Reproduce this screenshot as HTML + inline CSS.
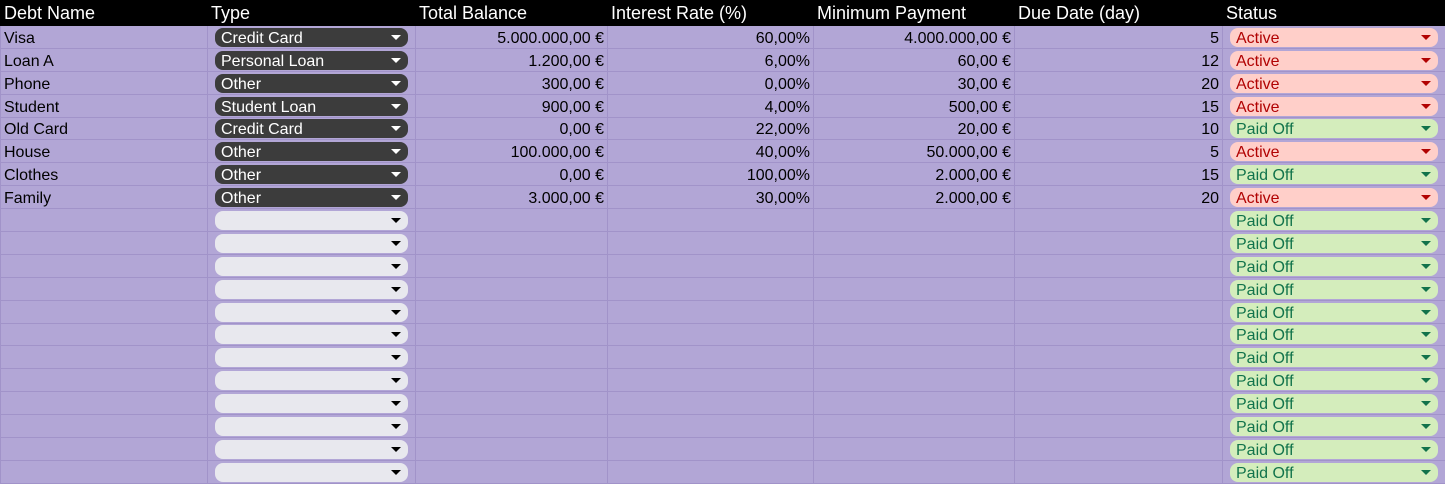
<!DOCTYPE html>
<html><head><meta charset="utf-8"><style>
body{margin:0;width:1445px;height:483px;overflow:hidden;background:#b2a6d6;font-family:"Liberation Sans",Arial,sans-serif;}
table{border-collapse:collapse;table-layout:fixed;width:1445px;margin-top:-1px;}
td,th{padding:0 3px;height:21.9px;border:1px solid #a193c9;font-size:16px;line-height:18px;white-space:nowrap;overflow:hidden;color:#000;vertical-align:bottom;}
th{background:#000;color:#fff;font-weight:normal;text-align:left;height:24px;border-color:#000;font-size:18px;padding-top:1px;vertical-align:middle;}
td.r{text-align:right;}
.chip{position:relative;height:19px;border-radius:8px;margin:0 4px 1px;padding-left:6px;line-height:21px;font-size:16px;}
.chip:after{content:"";position:absolute;right:7px;top:7px;border-left:5px solid transparent;border-right:5px solid transparent;border-top:5px solid currentColor;}
.d{background:#3c3c3c;color:#fff;}
.e{background:#e8e8ee;color:#000;}
.a{background:#ffcfc9;color:#b10202;}
.p{background:#d4edbc;color:#11734b;}
.s{padding:0 3px;vertical-align:bottom;}
</style></head><body>
<table>
<colgroup><col style="width:207px"><col style="width:208px"><col style="width:192px"><col style="width:206px"><col style="width:201px"><col style="width:208px"><col style="width:223px"></colgroup>
<tr><th>Debt Name</th><th>Type</th><th>Total Balance</th><th>Interest Rate (%)</th><th>Minimum Payment</th><th>Due Date (day)</th><th>Status</th></tr>
<tr><td>Visa</td><td class="s"><div class="chip d">Credit Card</div></td><td class="r">5.000.000,00 €</td><td class="r">60,00%</td><td class="r">4.000.000,00 €</td><td class="r">5</td><td class="s"><div class="chip a">Active</div></td></tr>
<tr><td>Loan A</td><td class="s"><div class="chip d">Personal Loan</div></td><td class="r">1.200,00 €</td><td class="r">6,00%</td><td class="r">60,00 €</td><td class="r">12</td><td class="s"><div class="chip a">Active</div></td></tr>
<tr><td>Phone</td><td class="s"><div class="chip d">Other</div></td><td class="r">300,00 €</td><td class="r">0,00%</td><td class="r">30,00 €</td><td class="r">20</td><td class="s"><div class="chip a">Active</div></td></tr>
<tr><td>Student</td><td class="s"><div class="chip d">Student Loan</div></td><td class="r">900,00 €</td><td class="r">4,00%</td><td class="r">500,00 €</td><td class="r">15</td><td class="s"><div class="chip a">Active</div></td></tr>
<tr><td>Old Card</td><td class="s"><div class="chip d">Credit Card</div></td><td class="r">0,00 €</td><td class="r">22,00%</td><td class="r">20,00 €</td><td class="r">10</td><td class="s"><div class="chip p">Paid Off</div></td></tr>
<tr><td>House</td><td class="s"><div class="chip d">Other</div></td><td class="r">100.000,00 €</td><td class="r">40,00%</td><td class="r">50.000,00 €</td><td class="r">5</td><td class="s"><div class="chip a">Active</div></td></tr>
<tr><td>Clothes</td><td class="s"><div class="chip d">Other</div></td><td class="r">0,00 €</td><td class="r">100,00%</td><td class="r">2.000,00 €</td><td class="r">15</td><td class="s"><div class="chip p">Paid Off</div></td></tr>
<tr><td>Family</td><td class="s"><div class="chip d">Other</div></td><td class="r">3.000,00 €</td><td class="r">30,00%</td><td class="r">2.000,00 €</td><td class="r">20</td><td class="s"><div class="chip a">Active</div></td></tr>
<tr><td></td><td class="s"><div class="chip e"></div></td><td></td><td></td><td></td><td></td><td class="s"><div class="chip p">Paid Off</div></td></tr>
<tr><td></td><td class="s"><div class="chip e"></div></td><td></td><td></td><td></td><td></td><td class="s"><div class="chip p">Paid Off</div></td></tr>
<tr><td></td><td class="s"><div class="chip e"></div></td><td></td><td></td><td></td><td></td><td class="s"><div class="chip p">Paid Off</div></td></tr>
<tr><td></td><td class="s"><div class="chip e"></div></td><td></td><td></td><td></td><td></td><td class="s"><div class="chip p">Paid Off</div></td></tr>
<tr><td></td><td class="s"><div class="chip e"></div></td><td></td><td></td><td></td><td></td><td class="s"><div class="chip p">Paid Off</div></td></tr>
<tr><td></td><td class="s"><div class="chip e"></div></td><td></td><td></td><td></td><td></td><td class="s"><div class="chip p">Paid Off</div></td></tr>
<tr><td></td><td class="s"><div class="chip e"></div></td><td></td><td></td><td></td><td></td><td class="s"><div class="chip p">Paid Off</div></td></tr>
<tr><td></td><td class="s"><div class="chip e"></div></td><td></td><td></td><td></td><td></td><td class="s"><div class="chip p">Paid Off</div></td></tr>
<tr><td></td><td class="s"><div class="chip e"></div></td><td></td><td></td><td></td><td></td><td class="s"><div class="chip p">Paid Off</div></td></tr>
<tr><td></td><td class="s"><div class="chip e"></div></td><td></td><td></td><td></td><td></td><td class="s"><div class="chip p">Paid Off</div></td></tr>
<tr><td></td><td class="s"><div class="chip e"></div></td><td></td><td></td><td></td><td></td><td class="s"><div class="chip p">Paid Off</div></td></tr>
<tr><td></td><td class="s"><div class="chip e"></div></td><td></td><td></td><td></td><td></td><td class="s"><div class="chip p">Paid Off</div></td></tr>
</table>
</body></html>
